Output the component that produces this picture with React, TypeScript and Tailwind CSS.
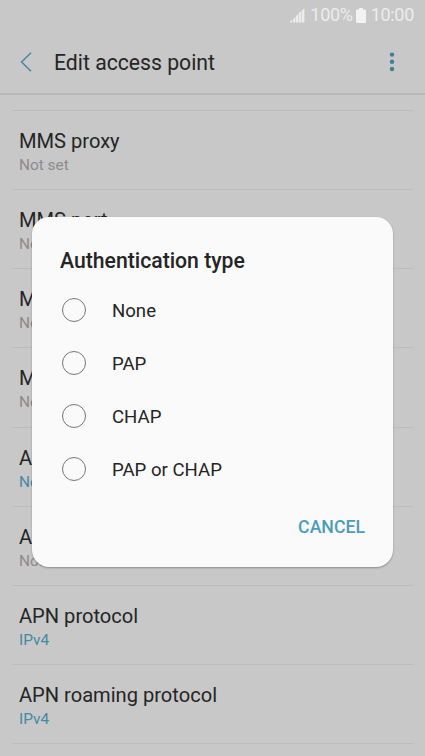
import { useState } from 'react';

const settings = [
  { title: 'MMS proxy', value: 'Not set', active: false },
  { title: 'MMS port', value: 'Not set', active: false },
  { title: 'MCC', value: 'Not set', active: false },
  { title: 'MNC', value: 'Not set', active: false },
  { title: 'Authentication type', value: 'Not set', active: true },
  { title: 'APN type', value: 'Not set', active: false },
  { title: 'APN protocol', value: 'IPv4', active: true },
  { title: 'APN roaming protocol', value: 'IPv4', active: true },
];

const authTypes = ['None', 'PAP', 'CHAP', 'PAP or CHAP'];

function StatusBar() {
  return (
    <div className="flex h-[30px] items-center justify-end pr-[11px] text-[18px] leading-[30px] tracking-[-0.3px] text-[#ececec]">
      <svg width="15" height="15" viewBox="0 0 15 15" fill="#ececec" className="mr-[5px]">
        <path d="M0 14.5V13.2L2 12V14.5ZM2.9 11.2L5.2 9.2V14.5H2.9ZM5.8 8.2L8.2 6V14.5H5.8ZM8.8 5.1L11.2 3V14.5H8.8ZM11.8 2.2L14.4 0.4V14.5H11.8Z" />
      </svg>
      <span>100%</span>
      <svg width="10" height="15" viewBox="0 0 10 15" fill="#f2f2f2" className="mr-[5px] ml-[3px]">
        <path d="M3 0H7V1.5H9Q10 1.5 10 2.5V14Q10 15 9 15H1Q0 15 0 14V2.5Q0 1.5 1 1.5H3Z" />
      </svg>
      <span>10:00</span>
    </div>
  );
}

function Header() {
  return (
    <header className="flex h-[65px] shrink-0 items-center border-b-2 border-[#b8b8b8] pr-[28px] pl-[20px]">
      <svg width="12" height="20" viewBox="0 0 12 20" fill="none" stroke="#4589a3" strokeWidth="1.5">
        <path d="M11 0.8L1.6 10L11 19.2" />
      </svg>
      <h1 className="mt-[2px] ml-[22px] flex-1 text-[21.2px] leading-6 text-[#252525]">Edit access point</h1>
      <svg width="10" height="20" viewBox="0 0 10 20" fill="#3f7f99">
        <circle cx="5" cy="2.6" r="2.2" />
        <circle cx="5" cy="9.8" r="2.2" />
        <circle cx="5" cy="17" r="2.2" />
      </svg>
    </header>
  );
}

export default function App() {
  const [selected, setSelected] = useState('');

  return (
    <div className="relative flex h-[756px] w-[425px] flex-col overflow-hidden bg-[#c8c8c8] font-['Roboto',sans-serif]">
      <StatusBar />
      <Header />

      <main className="mx-3 mt-[15px] border-t border-[#bcbcbc]">
        {settings.map(s => (
          <div key={s.title} className="h-[79.15px] border-b border-[#bcbcbc] pt-[18px] pl-[7px]">
            <p className="text-[20.1px] leading-[25px] text-[#252525]">{s.title}</p>
            <p className={`text-[15.4px] leading-[22px] ${s.active ? 'text-[#4589a3]' : 'text-[#8b8b8b]'}`}>{s.value}</p>
          </div>
        ))}
      </main>

      {/* Dialog over the settings list */}
      <div className="absolute top-[217px] left-8 flex h-[350px] w-[361px] flex-col rounded-[17px] bg-[#fafafa] pt-[30px] pl-7 shadow-[0_1px_2px_rgba(0,0,0,0.3)]">
        <h2 className="text-[21.2px] leading-7 font-medium text-[#252525]">Authentication type</h2>
        <div className="mt-[8.5px]">
          {authTypes.map(type => (
            <button key={type} onClick={() => setSelected(type)} className="flex h-[53.1px] w-full items-center pl-[2px] text-left">
              <span className="flex size-[24px] items-center justify-center rounded-full border-[1.4px] border-[#777777]">
                {selected === type && <span className="size-3 rounded-full bg-[#4b9dbb]" />}
              </span>
              <span className="mt-[2px] ml-[26px] text-[18.6px] leading-6 text-[#252525]">{type}</span>
            </button>
          ))}
        </div>
        <div className="mt-[19.5px] flex justify-end pr-7">
          <button onClick={() => setSelected('')} className="text-[17.7px] leading-6 font-medium text-[#4b9dbb]">CANCEL</button>
        </div>
      </div>
    </div>
  );
}
